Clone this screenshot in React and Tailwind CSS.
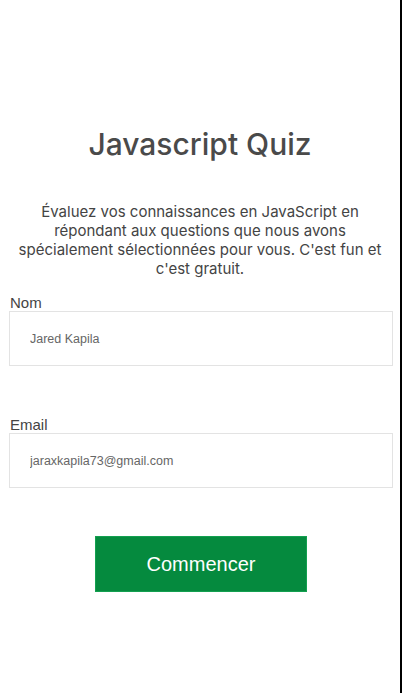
export default function App() {
  return (
    <div className="flex min-h-[693px] w-[404px] bg-white">
      <div className="w-[402px] min-h-[693px] border-r-2 border-black pl-[9px] pr-[9px]">
        <h1 className="mt-[126px] text-center text-[30px] leading-[36px] text-[#4a4a4a] font-['Inter',sans-serif] font-medium">
          Javascript Quiz
        </h1>
        <p className="mt-[40px] text-center text-[15px] leading-[19px] text-[#444] font-['Inter',sans-serif]">
          Évaluez vos connaissances en JavaScript en répondant aux questions que nous avons spécialement sélectionnées pour vous. C'est fun et c'est gratuit.
        </p>
        <form className="mt-[16px] flex flex-col font-['Liberation_Sans',Arial,sans-serif]">
          <label className="text-[15px] leading-[17px] text-[#444] pl-px">Nom</label>
          <input
            readOnly
            value="Jared Kapila"
            className="h-[55px] w-[384px] border border-[#e3e3e3] px-[20px] text-[12.5px] text-[#666] outline-none"
          />
          <label className="mt-[50px] text-[15px] leading-[17px] text-[#444] pl-px">Email</label>
          <input
            readOnly
            value="jaraxkapila73@gmail.com"
            className="h-[55px] w-[384px] border border-[#e3e3e3] px-[20px] text-[12.5px] text-[#666] outline-none"
          />
          <div className="mt-[48px] pl-[86px]">
            <button
              type="button"
              className="h-[56px] w-[212px] border border-[#13a050] bg-[#058a3e] text-[20px] text-white"
            >
              Commencer
            </button>
          </div>
        </form>
      </div>
    </div>
  );
}
